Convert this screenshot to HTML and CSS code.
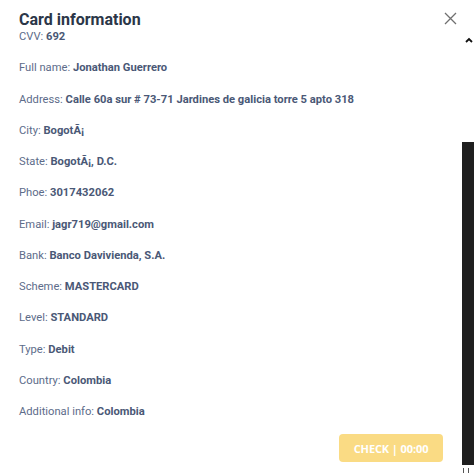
FILE: index.html
```html
<!DOCTYPE html>
<html>
<head>
<meta charset="utf-8">
<link rel="stylesheet" href="styles.css">
</head>
<body>
<div class="dialog">
  <h2 class="title">Card information</h2>
  <button class="close" aria-label="Close">
    <svg width="13" height="13" viewBox="0 0 13 13"><path d="M1 1L12 12M12 1L1 12" stroke="#707070" stroke-width="1.3" fill="none"/></svg>
  </button>
  <div class="rows">
    <p class="row">CVV: <b>692</b></p>
    <p class="row">Full name: <b>Jonathan Guerrero</b></p>
    <p class="row">Address: <b>Calle 60a sur # 73-71 Jardines de galicia torre 5 apto 318</b></p>
    <p class="row">City: <b>BogotÃ¡</b></p>
    <p class="row">State: <b>BogotÃ¡, D.C.</b></p>
    <p class="row">Phoe: <b>3017432062</b></p>
    <p class="row">Email: <b>jagr719@gmail.com</b></p>
    <p class="row">Bank: <b>Banco Davivienda, S.A.</b></p>
    <p class="row">Scheme: <b>MASTERCARD</b></p>
    <p class="row">Level: <b>STANDARD</b></p>
    <p class="row">Type: <b>Debit</b></p>
    <p class="row">Country: <b>Colombia</b></p>
    <p class="row">Additional info: <b>Colombia</b></p>
  </div>
  <div class="actions">
    <button class="check" disabled>CHECK | 00:00</button>
  </div>
</div>
<div class="caret">
  <svg width="8" height="6" viewBox="0 0 8 6"><path d="M1 5L4 2L7 5" stroke="#111" stroke-width="1.8" fill="none"/></svg>
</div>
<div class="sidebar"></div>
<div class="sidebar-tail"><span></span><span></span></div>
</body>
</html>
```
FILE: styles.css
```css
html, body {
  margin: 0;
  padding: 0;
  background: #ffffff;
}
body {
  width: 474px;
  height: 473px;
  overflow: hidden;
  position: relative;
  font-family: Roboto, "Liberation Sans", sans-serif;
}
.dialog {
  padding: 10px 0 0 19px;
  width: 425px;
  position: relative;
}
.title {
  margin: 0;
  font-size: 16px;
  line-height: 20px;
  font-weight: 700;
  color: #2b3648;
}
.close {
  position: absolute;
  top: 12px;
  left: 444px;
  width: 13px;
  height: 13px;
  padding: 0;
  border: 0;
  background: none;
  display: flex;
}
.rows {
  display: flex;
  flex-direction: column;
  gap: 15.27px;
  margin-top: -1px;
}
.row {
  margin: 0;
  font-size: 11.2px;
  line-height: 16px;
  color: #5d6c8a;
}
.row b {
  font-weight: 700;
  color: #4a5876;
}
.actions {
  display: flex;
  justify-content: flex-end;
  margin-top: 14px;
  padding-right: 1px;
}
.check {
  width: 104px;
  height: 28px;
  border: 0;
  border-radius: 4px;
  background: #fadb84;
  color: #ffffff;
  font-family: "Open Sans", sans-serif;
  font-weight: 700;
  font-size: 11px;
  letter-spacing: -0.1px;
  padding: 0;
}
.caret {
  position: absolute;
  left: 465px;
  top: 37px;
  display: flex;
}
.sidebar {
  position: absolute;
  left: 462px;
  top: 142px;
  width: 12px;
  height: 323px;
  background: #1f1f1f;
}
.sidebar-tail {
  position: absolute;
  left: 463px;
  top: 468px;
  display: flex;
  gap: 4px;
}
.sidebar-tail span {
  width: 1px;
  height: 5px;
  background: #555;
}
```
